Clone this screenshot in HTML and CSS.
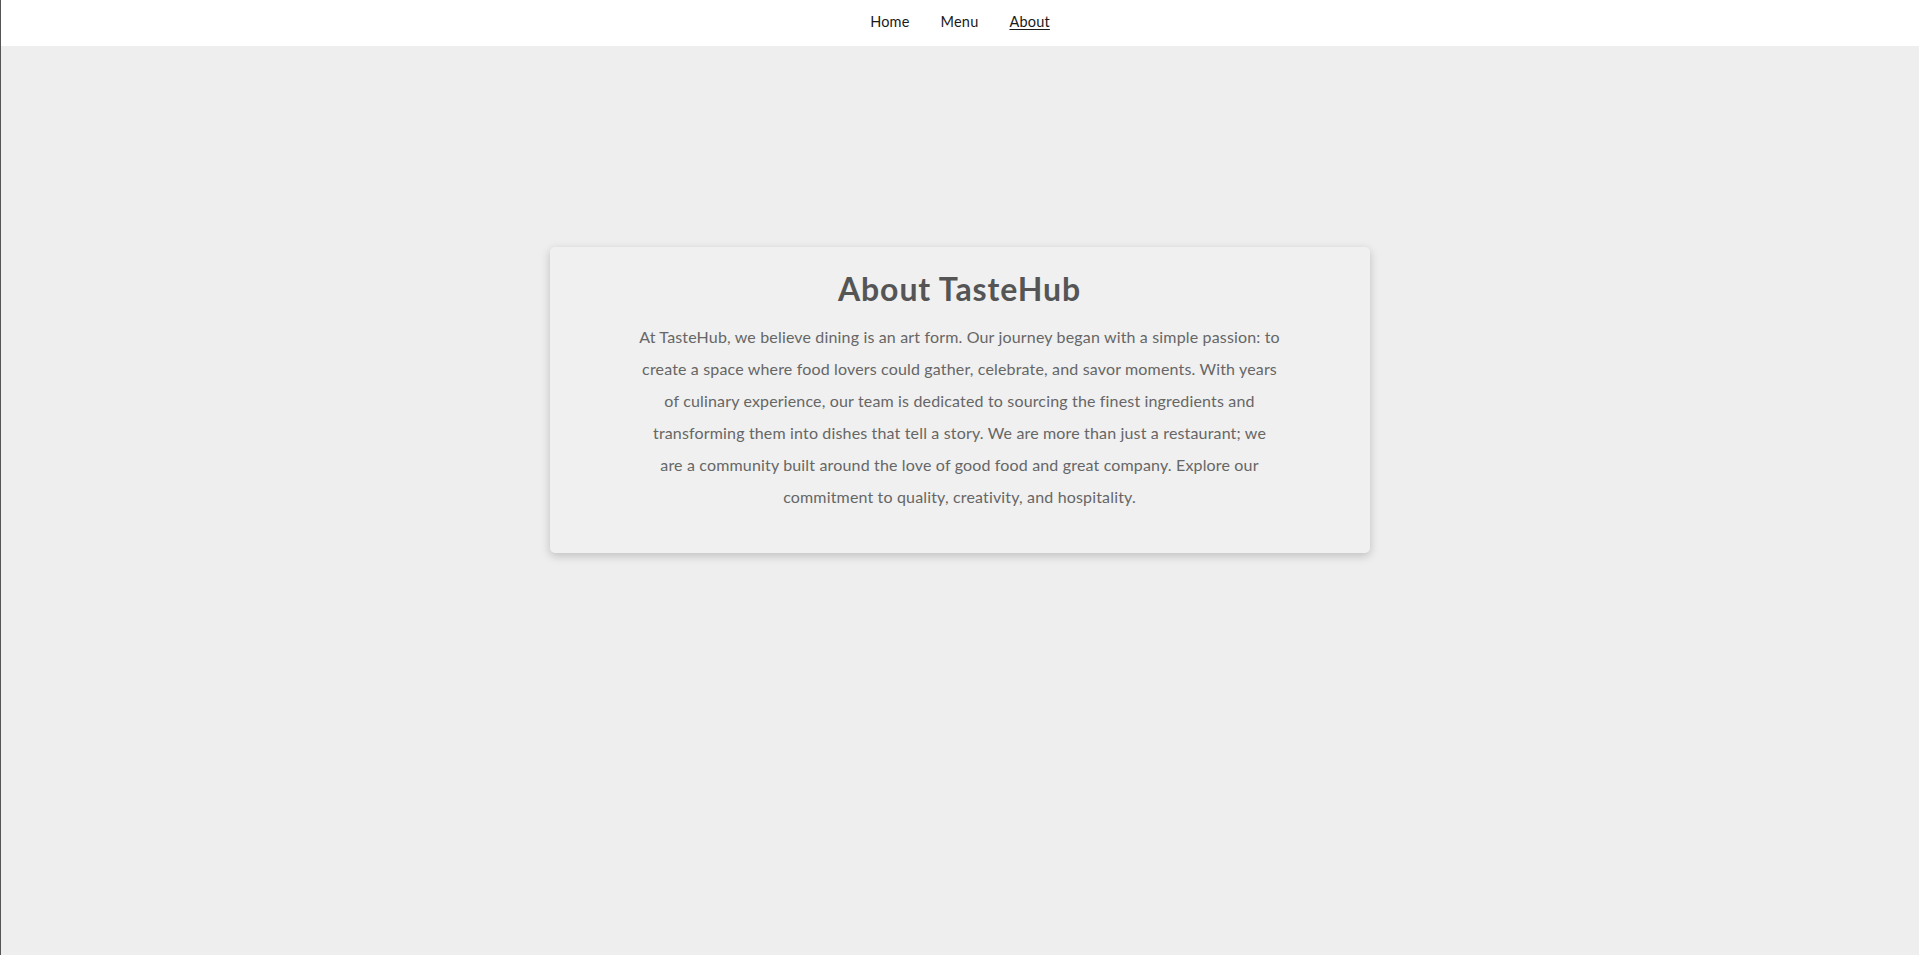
FILE: index.html
```html
<!DOCTYPE html>
<html lang="en">
<head>
<meta charset="utf-8">
<title>About - TasteHub</title>
<link rel="stylesheet" href="styles.css">
</head>
<body>
<div class="page">
  <header class="topbar">
    <nav class="nav">
      <a href="#" class="nav-link">Home</a>
      <a href="#" class="nav-link">Menu</a>
      <a href="#" class="nav-link active">About</a>
    </nav>
  </header>
  <main class="main">
    <section class="about-card">
      <h1 class="about-title">About TasteHub</h1>
      <p class="about-text">At TasteHub, we believe dining is an art form. Our journey began with a simple passion: to<br>create a space where food lovers could gather, celebrate, and savor moments. With years<br>of culinary experience, our team is dedicated to sourcing the finest ingredients and<br>transforming them into dishes that tell a story. We are more than just a restaurant; we<br>are a community built around the love of good food and great company. Explore our<br>commitment to quality, creativity, and hospitality.</p>
    </section>
  </main>
</div>
</body>
</html>
```
FILE: styles.css
```css
html, body {
  margin: 0;
  padding: 0;
}
body {
  background: #eeeeee;
  font-family: "Lato", "Open Sans", sans-serif;
}
.page {
  min-height: 100vh;
  border-left: 1px solid #555555;
  box-sizing: border-box;
  display: flex;
  flex-direction: column;
}
.topbar {
  background: #ffffff;
  height: 46px;
  display: flex;
  align-items: center;
  justify-content: center;
}
.nav {
  display: flex;
  gap: 31px;
  padding-bottom: 3px;
}
.nav-link {
  color: #1a1a1a;
  text-decoration: none;
  font-size: 14.5px;
  letter-spacing: 0.2px;
}
.nav-link.active {
  text-decoration: underline;
  text-underline-offset: 2px;
}
.main {
  display: flex;
  justify-content: center;
  padding-top: 201px;
  padding-right: 1px;
}
.about-card {
  width: 820px;
  box-sizing: border-box;
  background: #f0f0f0;
  border-radius: 5px;
  box-shadow: 0 3px 10px rgba(0, 0, 0, 0.2);
  padding: 22px 40px 40px;
  text-align: center;
}
.about-title {
  margin: 0 0 12px;
  font-size: 32px;
  line-height: 40px;
  font-weight: 700;
  letter-spacing: 0.9px;
  color: #555555;
}
.about-text {
  margin: 0 auto;
  max-width: 680px;
  font-size: 16px;
  line-height: 32px;
  letter-spacing: 0.16px;
  color: #666666;
}
```
